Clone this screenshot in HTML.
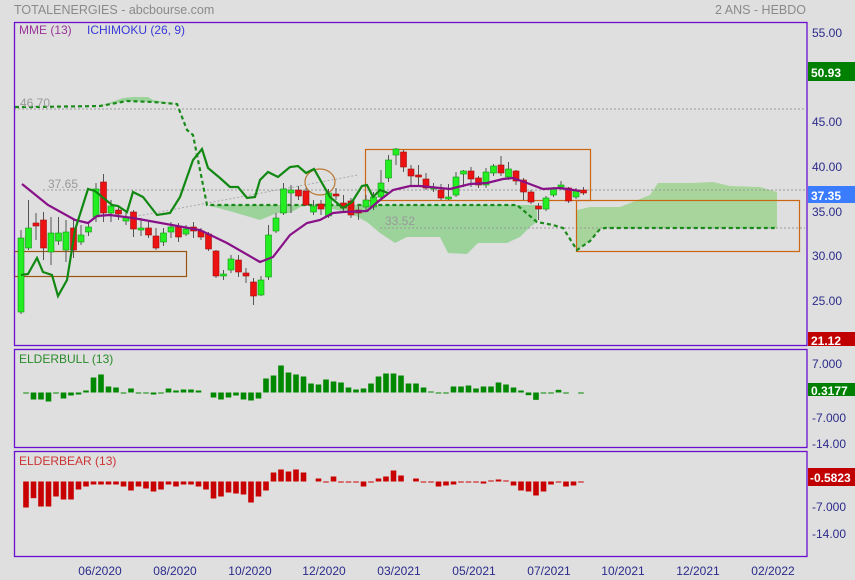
<!DOCTYPE html>
<html><head><meta charset="utf-8"><style>
html,body{margin:0;padding:0;background:#dfdfdf;}
svg{display:block;font-family:"Liberation Sans",sans-serif;}
</style></head><body>
<svg id="s" width="855" height="580" xmlns="http://www.w3.org/2000/svg">
<rect width="855" height="580" fill="#dfdfdf"/>
<text x="14" y="14" font-size="12.5" fill="#8a8a8a">TOTALENERGIES - abcbourse.com</text>
<text x="806" y="14" font-size="12.5" fill="#8a8a8a" text-anchor="end">2 ANS - HEBDO</text>
<g id="g"></g>
<rect x="14.5" y="22.5" width="792.5" height="323" fill="none" stroke="#6a0fd0" stroke-width="1.3"/>
<rect x="14.5" y="349.5" width="792.5" height="98" fill="none" stroke="#6a0fd0" stroke-width="1.3"/>
<rect x="14.5" y="451.5" width="792.5" height="105" fill="none" stroke="#6a0fd0" stroke-width="1.3"/>
<text x="19" y="34" font-size="12" fill="#993399">MME (13)</text>
<text x="87" y="34" font-size="12" fill="#3838d8">ICHIMOKU (26, 9)</text>
<text x="19" y="363" font-size="12" fill="#2a8a2a">ELDERBULL (13)</text>
<text x="19" y="465" font-size="12" fill="#cc3333">ELDERBEAR (13)</text>
<text x="20" y="107" font-size="12" fill="#999">46.70</text>
<text x="48" y="188" font-size="12" fill="#999">37.65</text>
<text x="385" y="225" font-size="12" fill="#999">33.52</text>
<g font-size="12" fill="#2b2b8a">
<text x="812" y="37">55.00</text>
<text x="812" y="126">45.00</text>
<text x="812" y="171">40.00</text>
<text x="812" y="216">35.00</text>
<text x="812" y="260">30.00</text>
<text x="812" y="305">25.00</text>
<text x="812" y="368">7.000</text>
<text x="812" y="422">-7.000</text>
<text x="812" y="448">-14.00</text>
<text x="812" y="511">-7.000</text>
<text x="812" y="538">-14.00</text>
</g>
<rect x="808" y="62" width="47" height="19" fill="#008000"/><text x="811" y="77" font-size="12" font-weight="bold" fill="#fff">50.93</text>
<rect x="808" y="186" width="47" height="17" fill="#3b7cff"/><text x="811" y="200" font-size="12" font-weight="bold" fill="#fff">37.35</text>
<rect x="808" y="332" width="47" height="14" fill="#c00000"/><text x="811" y="345" font-size="12" font-weight="bold" fill="#fff">21.12</text>
<rect x="808" y="383" width="47" height="13" fill="#008000"/><text x="811" y="395" font-size="12" font-weight="bold" fill="#fff">0.3177</text>
<rect x="808" y="468" width="47" height="18" fill="#c00000"/><text x="810" y="482" font-size="12" font-weight="bold" fill="#fff">-0.5823</text>
<g font-size="12" fill="#2b2b8a" text-anchor="middle">
<text x="100" y="575">06/2020</text><text x="175" y="575">08/2020</text><text x="250" y="575">10/2020</text>
<text x="324" y="575">12/2020</text><text x="399" y="575">03/2021</text><text x="474" y="575">05/2021</text>
<text x="549" y="575">07/2021</text><text x="623" y="575">10/2021</text><text x="698" y="575">12/2021</text>
<text x="773" y="575">02/2022</text>
</g>
</svg>
<script>
var g=document.getElementById('g'),NS='http://www.w3.org/2000/svg',h='';
// cloud fills
h+='<path d="M100,106 L123,98 L133,97 L148,97 L153,100 L177,104 L153,102 L127,101 Z" fill="#8fd18f" opacity="0.85"/>';
h+='<path d="M207,205 L537,205 L537,222 L530,227 L520,237 L507,243 L478,243 L467,254 L448,253 L440,237 L407,237 L395,243 L380,233 L367,222 L350,213 L307,203 L290,213 L277,213 L260,220 L233,212 Z" fill="#8fd18f" opacity="0.85"/>';
h+='<path d="M577,250 L577,210 L590,207 L620,207 L650,195 L658,183 L693,183 L713,182 L730,186 L760,187 L777,192 L777,228 L605,228 L600,229 L590,241 Z" fill="#9fd48f" opacity="0.85"/>';
// dotted lines
h+='<line x1="14" y1="109" x2="805" y2="109" stroke="#999" stroke-dasharray="2,2"/>';
h+='<line x1="43" y1="190" x2="805" y2="190" stroke="#999" stroke-dasharray="2,2"/>';
h+='<line x1="380" y1="228" x2="805" y2="228" stroke="#999" stroke-dasharray="2,2"/>';
h+='<line x1="127" y1="218" x2="358" y2="175" stroke="#aaa" stroke-dasharray="2,2"/>';
// boxes
h+='<rect x="14.5" y="251.5" width="172" height="25" fill="none" stroke="#995511" stroke-width="1.2"/>';
h+='<rect x="365.5" y="149.5" width="225" height="51" fill="none" stroke="#cc6611" stroke-width="1.2"/>';
h+='<rect x="576.5" y="200.5" width="223" height="51" fill="none" stroke="#cc6611" stroke-width="1.2"/>';
h+='<ellipse cx="320" cy="182" rx="15" ry="13" fill="none" stroke="#bb7733" stroke-width="1.2"/>';
// dashed senkou
h+='<polyline points="15,107 33,107 100,106 127,101 153,102 177,104 187,130 193,135 207,205 517,205 537,222 553,225 563,228 577,250 590,241 600,229 605,228 777,228" fill="none" stroke="#1a8a1a" stroke-width="2.2" stroke-dasharray="4,3"/>';
// candles
var C=[[0,'G',238,312,230,314],[1,'G',228,248,200,250],[2,'R',223,226,213,240],[3,'R',220,248,212,260],[4,'G',233,252,217,265],[5,'G',233,241,217,245],[6,'G',232,250,220,262],[7,'R',228,250,218,258],[8,'G',235,242,225,245],[9,'G',227,232,222,236],[10,'G',189,217,183,222],[11,'R',182,213,174,222],[12,'G',206,213,200,222],[13,'R',210,214,205,220],[14,'G',217,221,212,225],[15,'R',212,229,210,237],[16,'G',228,229,218,236],[17,'R',228,235,222,238],[18,'R',236,248,228,250],[19,'G',233,242,228,246],[20,'G',227,232,222,238],[21,'R',227,237,223,242],[22,'G',229,234,225,236],[23,'R',227,231,222,238],[24,'R',231,237,228,240],[25,'R',234,249,232,251],[26,'R',251,276,250,278],[27,'G',274,276,270,280],[28,'G',259,270,255,273],[29,'R',260,272,255,277],[30,'R',273,276,268,283],[31,'R',282,296,278,305],[32,'G',280,295,276,296],[33,'G',235,277,225,280],[34,'G',218,231,213,233],[35,'G',189,213,183,215],[36,'G',190,193,185,213],[37,'R',190,196,186,200],[38,'R',191,205,188,206],[39,'G',206,212,200,215],[40,'R',204,209,200,215],[41,'G',193,216,189,218],[42,'R',194,196,188,200],[43,'R',203,208,195,213],[44,'R',201,215,198,218],[45,'R',210,213,205,220],[46,'G',200,207,195,212],[47,'G',197,207,192,210],[48,'G',183,197,170,200],[49,'G',160,178,155,182],[50,'G',149,155,148,165],[51,'R',152,167,150,172],[52,'R',169,176,165,187],[53,'R',175,177,165,185],[54,'R',179,188,173,190],[55,'G',187,189,183,192],[56,'R',190,198,184,200],[57,'G',197,199,184,200],[58,'G',177,195,172,197],[59,'G',171,174,170,187],[60,'R',171,179,167,187],[61,'R',178,185,176,188],[62,'G',172,185,168,188],[63,'G',166,173,164,176],[64,'R',165,173,156,176],[65,'G',169,177,162,180],[66,'R',171,181,170,185],[67,'R',180,192,178,200],[68,'R',192,202,190,204],[69,'R',206,209,203,220],[70,'G',198,209,196,211],[71,'G',188,195,187,197],[72,'G',185,187,181,190],[73,'R',188,201,187,203],[74,'G',190,197,188,199],[75,'R',190,193,187,195]];
C.forEach(function(c){var x=21+7.5*c[0];
h+='<line x1="'+x+'" y1="'+c[4]+'" x2="'+x+'" y2="'+c[5]+'" stroke="#555" stroke-width="1"/>';
var f=c[1]=='G'?'#22ee22':'#ee1111',s=c[1]=='G'?'#119911':'#991111';
h+='<rect x="'+(x-3)+'" y="'+c[2]+'" width="6" height="'+Math.max(2,c[3]-c[2])+'" fill="'+f+'" stroke="'+s+'" stroke-width="0.6"/>';});
// MME
h+='<polyline points="22,184 48,205 75,220 88,223 97,216 110,215 133,218 200,230 227,243 260,262 273,257 290,235 307,223 320,220 333,213 343,212 367,211 380,200 393,190 410,186 420,186 450,189 470,184 487,183 503,179 513,178 527,183 543,189 560,188 580,191" fill="none" stroke="#881188" stroke-width="2.2"/>';
// tenkan/kijun
h+='<polyline points="21,275 28,274 37,258 43,272 52,275 58,296 67,280 75,230 88,189 95,191 112,205 118,206 127,212 133,192 143,197 157,215 170,213 180,197 193,160 202,149 208,168 220,178 230,187 238,187 247,198 255,197 260,180 268,172 278,177 290,167 298,166 306,173 314,169 330,197 343,208 352,202 362,186 367,185 373,197 380,190 388,193" fill="none" stroke="#118811" stroke-width="2.2"/>';
// elder bull
var B=[-3,-21,-21,-27,-3,-18,-9,-6,6,45,54,18,15,-3,12,-3,-3,-6,-3,12,6,9,9,6,0,-15,-21,-15,-9,-21,-24,-18,42,51,81,60,54,48,27,24,39,33,30,15,9,12,27,48,57,57,51,27,27,15,3,-3,-3,18,18,21,12,18,18,30,24,15,6,-8,-22,-3,-3,8,-3,0,-3];
var zb=392.5;
B.forEach(function(v,i){if(!v)return;var x=26+7.5*i,hh=Math.max(1,Math.abs(v)/3);
h+='<rect x="'+(x-2.8)+'" y="'+(v>0?zb-hh:zb)+'" width="5.6" height="'+hh+'" fill="#008800"/>';});
var E=[-78,-50,-75,-75,-45,-54,-54,-24,-15,-9,-9,-9,-9,-15,-27,-15,-21,-30,-24,-9,-15,-9,-9,-15,-24,-51,-45,-33,-36,-39,-63,-45,-27,27,36,30,36,27,0,9,-3,15,-3,-3,-3,-15,-3,9,15,33,18,0,9,-3,-3,-15,-12,-9,-3,-3,-3,-6,3,6,2,-12,-27,-30,-42,-30,-9,-3,-15,-12,-3];
var ze=481.5;
E.forEach(function(v,i){if(!v)return;var x=26+7.5*i,hh=Math.max(1,Math.abs(v)/3);
h+='<rect x="'+(x-2.8)+'" y="'+(v>0?ze-hh:ze)+'" width="5.6" height="'+hh+'" fill="#c80000"/>';});
g.innerHTML=h;
</script>
</body></html>
